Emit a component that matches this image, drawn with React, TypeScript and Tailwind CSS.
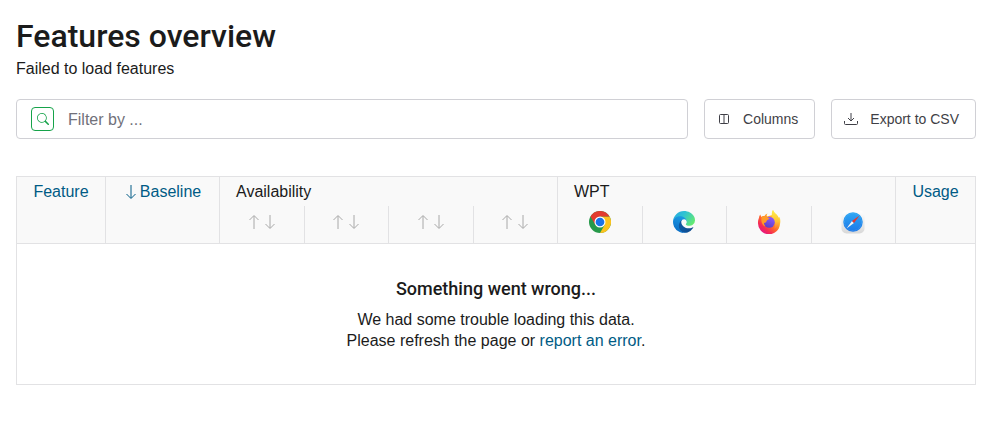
import React from 'react';
import { BsSearch } from 'react-icons/bs';

function Arrow({ up = false, className = '' }: { up?: boolean; className?: string }) {
  return (
    <svg viewBox="0 0 10 16" className={`inline-block h-4 w-[10px] ${className}`} fill="none" stroke="currentColor" aria-hidden="true">
      {up ? <path d="M5 15V2M.5 6 5 1.500 9.500 6" /> : <path d="M5 1v13M.5 10 5 14.500 9.500 10" />}
    </svg>
  );
}

function ChromeLogo() {
  return (
    <svg viewBox="0 0 48 48" className="size-[22px]" role="img" aria-label="Chrome">
      <circle cx="24" cy="24" r="24" fill="#26994a" />
      <path fill="#fcc31e" d="M24 12h20.800A24 24 0 0 1 24 48l10.400-18Z" />
      <path fill="#e33b2e" d="M13.600 30 3.200 12A24 24 0 0 1 44.800 12H24Z" />
      <circle cx="24" cy="24" r="12" fill="#fff" />
      <circle cx="24" cy="24" r="9.500" fill="#1a73e8" />
    </svg>
  );
}

function EdgeLogo() {
  return (
    <svg viewBox="0 0 256 256" className="size-[22px]" role="img" aria-label="Edge">
      <defs>
        <linearGradient id="edgeDark" x1="0" x2="1"><stop stopColor="#0c59a4" /><stop offset="1" stopColor="#114a8b" /></linearGradient>
        <linearGradient id="edgeBlue" x1=".6" y1="0" x2=".3" y2="1"><stop stopColor="#1b9de2" /><stop offset=".5" stopColor="#1484d6" /><stop offset="1" stopColor="#0a6cc4" /></linearGradient>
        <linearGradient id="edgeTop" x1="0" y1=".2" x2="1" y2=".7"><stop stopColor="#26a9df" /><stop offset=".4" stopColor="#2fc2d4" /><stop offset="1" stopColor="#66eb6e" /></linearGradient>
      </defs>
      <path fill="url(#edgeDark)" d="M231 190.500c-3.400 1.800-6.900 3.400-10.500 4.700a101.700 101.700 0 0 1-35.900 6.500c-47.300 0-88.500-32.500-88.500-74.300.1-11.400 6.400-21.900 16.400-27.300-42.800 1.800-53.800 46.400-53.800 72.500 0 73.900 68.100 81.400 82.800 81.400 7.900 0 19.800-2.300 27-4.600l1.300-.4a128.300 128.300 0 0 0 66.600-52.800 4 4 0 0 0-5.400-5.700Z" />
      <path fill="url(#edgeBlue)" d="M105.700 241.400a79.200 79.200 0 0 1-22.700-21.300A80.700 80.700 0 0 1 112.500 100c3.100-1.500 8.500-4.100 15.600-4a32.400 32.400 0 0 1 25.700 13c4 5.300 6.300 11.700 6.300 18.300 0-.2 24.500-79.600-80-79.600C36.200 47.700.1 89.400.1 126a130 130 0 0 0 12.100 56 128 128 0 0 0 156.400 67 75.500 75.500 0 0 1-62.800-7.900Z" />
      <path fill="url(#edgeTop)" d="M152.300 148.900c-.8 1-3.300 2.500-3.300 5.700 0 2.600 1.700 5.100 4.700 7.200 14.400 10 41.500 8.700 41.600 8.700a59.600 59.600 0 0 0 30.300-8.300A61.400 61.400 0 0 0 256 109.200c.3-22.400-8-37.300-11.300-43.900C223.500 23.900 177.700 0 128 0A128 128 0 0 0 0 126.200c.5-36.500 36.800-66 80-66 3.500 0 23.500.3 42 10a72.600 72.600 0 0 1 30.900 29.300c6.100 10.600 7.200 24.100 7.200 29.500s-2.700 13.300-7.800 19.900Z" />
    </svg>
  );
}

function FirefoxLogo() {
  return (
    <svg viewBox="0 0 48 48" className="size-6" role="img" aria-label="Firefox">
      <defs>
        <linearGradient id="foxBody" x1=".85" y1=".1" x2=".2" y2=".95"><stop stopColor="#fff44f" /><stop offset=".3" stopColor="#ffb02b" /><stop offset=".55" stopColor="#ff6a2b" /><stop offset=".8" stopColor="#f52a55" /><stop offset="1" stopColor="#e31587" /></linearGradient>
        <linearGradient id="foxGlobe" x1=".7" y1="0" x2=".3" y2="1"><stop stopColor="#9059ff" /><stop offset="1" stopColor="#5b3fc4" /></linearGradient>
        <linearGradient id="foxFlame" x1=".5" y1="0" x2=".5" y2="1"><stop stopColor="#fff14a" /><stop offset=".6" stopColor="#ffc233" /><stop offset="1" stopColor="#ff7139" /></linearGradient>
      </defs>
      <path fill="url(#foxBody)" d="M7 9c0 2 1 4 2 5 2-2 4-2 6-2 1-2 3-4 6-5-2 3-2 5-1 6l11-3c-2-5 0-8 1-10 2 6 7 8 10 13 1 1 1 2 1 3l2-2c2 5 2 9 1 14A22 22 0 0 1 2 25c0-4 1-7 2-9 0-3 1-5 3-7Z" />
      <path fill="url(#foxFlame)" d="M32 0c2 6 7 8 10 13 5 10 0 20-8 25 4-7 3-16-3-20-1-6-3-11 1-18Z" />
      <circle cx="24.500" cy="24.500" r="11" fill="url(#foxGlobe)" />
      <path fill="#ff9a28" d="M9 14c4-3 8-2 11-1 1 2 3 3 5 3-1 3-5 4-6 6 0 3-3 3-5 4 0 3 1 5 3 7-8-3-9-11-8-19Z" />
    </svg>
  );
}

function SafariLogo() {
  return (
    <svg viewBox="0 0 48 48" className="size-6" role="img" aria-label="Safari">
      <defs>
        <linearGradient id="safTile" x1="0" y1="0" x2="0" y2="1"><stop stopColor="#fff" /><stop offset="1" stopColor="#d8d8d8" /></linearGradient>
        <linearGradient id="safDial" x1="0" y1="0" x2="0" y2="1"><stop stopColor="#2fa8f4" /><stop offset="1" stopColor="#1d78e8" /></linearGradient>
      </defs>
      <rect x="1" y="1" width="46" height="46" rx="10" fill="url(#safTile)" />
      <circle cx="24" cy="24" r="19.500" fill="url(#safDial)" />
      <circle cx="24" cy="24" r="17" fill="none" stroke="#8fcdf7" strokeWidth="2" strokeDasharray="1 2" opacity=".4" />
      <path fill="#f4f4f4" d="m11 37 11-15 4 4Z" />
      <path fill="#e8352e" d="m37 11-15 11 4 4Z" />
    </svg>
  );
}

const browsers = [ChromeLogo, EdgeLogo, FirefoxLogo, SafariLogo];
const link = 'text-[#005b85]';
const edge = 'border-[#e2e2e4]';
const control = 'flex h-10 items-center rounded border border-[#d0d0d5] bg-white text-sm text-[#3f3f46]';

export default function App() {
  return (
    <main className="p-4 font-['Liberation_Sans',Arial,sans-serif] text-base text-[#1b1b1b]">
      <h1 className="font-[Roboto,sans-serif] text-[32px] leading-10 font-medium">Features overview</h1>
      <p className="leading-[26px]">Failed to load features</p>

      <div className="mt-[17px] flex gap-4">
        <div className="flex h-10 flex-1 items-center rounded border border-[#d0d0d5] pl-[14px]">
          <button type="button" aria-label="Search" className="flex h-6 w-[23px] items-center justify-center rounded border border-[#16a34a] text-[#16a34a]">
            <BsSearch size={12} />
          </button>
          <input aria-label="Filter features" placeholder="Filter by ..." className="ml-[14px] h-full min-w-0 flex-1 bg-transparent pt-px outline-none placeholder:text-[#71717a]" />
        </div>
        <button type="button" className={`${control} pr-4 pl-[14px]`}>
          <svg viewBox="0 0 10 10" className="mr-[14px] size-[10px]" fill="none" stroke="currentColor" aria-hidden="true">
            <rect x=".5" y=".5" width="9" height="9" rx="1" />
            <path d="M5 1v8" />
          </svg>
          Columns
        </button>
        <button type="button" className={`${control} pr-4 pl-3`}>
          <svg viewBox="0 0 14 14" className="mr-3 size-[14px]" fill="none" stroke="currentColor" aria-hidden="true">
            <path d="M.5 9v2.500a1 1 0 0 0 1 1h11a1 1 0 0 0 1-1V9M7 1v8M4 6l3 3 3-3" />
          </svg>
          Export to CSV
        </button>
      </div>

      <table className={`mt-[37px] w-full table-fixed border-collapse border ${edge}`}>
        <colgroup>
          <col className="w-[89px]" />
          <col className="w-[114px]" />
          <col span={8} />
          <col className="w-20" />
        </colgroup>
        <thead className="bg-[#f9f9f9] leading-6">
          <tr className="h-[29px]">
            <th rowSpan={2} className={`border p-0 pt-[3px] align-top font-normal ${edge}`}>
              <a href="#feature" className={link}>Feature</a>
            </th>
            <th rowSpan={2} className={`border p-0 pt-[3px] align-top font-normal ${edge}`}>
              <a href="#baseline" className={`flex items-center justify-center gap-1 pl-[2px] ${link}`}><Arrow />Baseline</a>
            </th>
            <th colSpan={4} className={`border-x border-t px-4 pt-[3px] pb-0 text-left align-top font-normal ${edge}`}>Availability</th>
            <th colSpan={4} className={`border-x border-t px-4 pt-[3px] pb-0 text-left align-top font-normal ${edge}`}>WPT</th>
            <th rowSpan={2} className={`border p-0 pt-[3px] align-top font-normal ${edge}`}>
              <a href="#usage" className={link}>Usage</a>
            </th>
          </tr>
          <tr className="h-[38px]">
            {browsers.map((_, i) => (
              <th key={i} className={`border-x border-b p-0 pb-[5px] ${edge}`}>
                <a href="#availability" aria-label="Sort by availability" className="flex items-center justify-center gap-[6px] text-[#a8a8a8]">
                  <Arrow up /><Arrow />
                </a>
              </th>
            ))}
            {browsers.map((Logo, i) => (
              <th key={i} className={`border-x border-b p-0 pb-[5px] ${edge}`}>
                <a href="#wpt" className="flex h-6 items-center justify-center"><Logo /></a>
              </th>
            ))}
          </tr>
        </thead>
        <tbody>
          <tr>
            <td colSpan={11} className="px-4 pt-8 pb-[33px] text-center">
              <h2 className="mb-[7px] font-[Roboto,sans-serif] text-lg leading-[26px] font-medium">Something went wrong...</h2>
              <p className="leading-[21px]">We had some trouble loading this data.</p>
              <p className="leading-[21px]">Please refresh the page or <a href="#report" className={link}>report an error</a>.</p>
            </td>
          </tr>
        </tbody>
      </table>
    </main>
  );
}
